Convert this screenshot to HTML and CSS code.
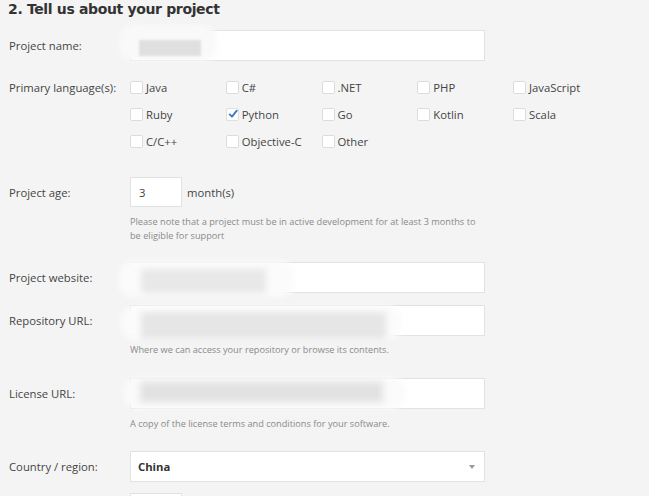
FILE: index.html
```html
<!DOCTYPE html>
<html>
<head>
<meta charset="utf-8">
<link rel="stylesheet" href="styles.css">
</head>
<body>
<h2 class="title">2. Tell us about your project</h2>
<form class="form">
  <div class="row row-name">
    <label class="lbl">Project name:</label>
    <div class="field wide">
      <div class="blur-halo halo-name"></div>
      <div class="blur blur-name"></div>
    </div>
  </div>

  <div class="row row-lang">
    <label class="lbl lbl-top">Primary language(s):</label>
    <div class="langs">
      <span class="opt"><i class="cb"></i>Java</span>
      <span class="opt"><i class="cb"></i>C#</span>
      <span class="opt"><i class="cb"></i>.NET</span>
      <span class="opt"><i class="cb"></i>PHP</span>
      <span class="opt"><i class="cb"></i>JavaScript</span>
      <span class="opt"><i class="cb"></i>Ruby</span>
      <span class="opt"><i class="cb checked"><svg viewBox="0 0 12 12" width="12" height="12"><path d="M2 6.5 L4.8 9.2 L10.5 2" fill="none" stroke="#3b78c9" stroke-width="2.2" stroke-linecap="round" stroke-linejoin="round"/></svg></i>Python</span>
      <span class="opt"><i class="cb"></i>Go</span>
      <span class="opt"><i class="cb"></i>Kotlin</span>
      <span class="opt"><i class="cb"></i>Scala</span>
      <span class="opt"><i class="cb"></i>C/C++</span>
      <span class="opt"><i class="cb"></i>Objective-C</span>
      <span class="opt"><i class="cb"></i>Other</span>
    </div>
  </div>

  <div class="row row-age">
    <label class="lbl">Project age:</label>
    <div class="age">
      <div class="field small"><span class="val">3</span></div>
      <span class="unit">month(s)</span>
    </div>
  </div>
  <div class="row note-row note-age">
    <span class="spacer"></span>
    <p class="note">Please note that a project must be in active development for at least 3 months to be eligible for support</p>
  </div>

  <div class="row row-web">
    <label class="lbl">Project website:</label>
    <div class="field wide">
      <div class="blur-halo halo-web"></div>
      <div class="blur blur-web"></div>
    </div>
  </div>

  <div class="row row-repo">
    <label class="lbl">Repository URL:</label>
    <div class="field wide">
      <div class="blur-halo halo-repo"></div>
      <div class="blur blur-repo"></div>
    </div>
  </div>
  <div class="row note-row note-repo">
    <span class="spacer"></span>
    <p class="note">Where we can access your repository or browse its contents.</p>
  </div>

  <div class="row row-lic">
    <label class="lbl">License URL:</label>
    <div class="field wide">
      <div class="blur-halo halo-lic"></div>
      <div class="blur blur-lic"></div>
    </div>
  </div>
  <div class="row note-row note-lic">
    <span class="spacer"></span>
    <p class="note">A copy of the license terms and conditions for your software.</p>
  </div>

  <div class="row row-country">
    <label class="lbl">Country / region:</label>
    <div class="field wide select">
      <span class="sel-val">China</span>
      <span class="arrow"></span>
    </div>
  </div>

  <div class="row row-last">
    <span class="spacer"></span>
    <div class="field small"></div>
  </div>
</form>
</body>
</html>
```
FILE: styles.css
```css
html, body {
  margin: 0;
  padding: 0;
  background: #f4f4f4;
  overflow: hidden;
}
body {
  padding: 0 8px;
  font-family: "Open Sans", "Liberation Sans", sans-serif;
  color: #444;
  height: 496px;
}
.title {
  margin: 0;
  padding-top: 0;
  font-family: "DejaVu Sans", sans-serif;
  font-weight: 700;
  font-size: 14px;
  line-height: 18px;
  color: #333;
  letter-spacing: -0.35px;
}
.form {
  display: flex;
  flex-direction: column;
}
.row {
  display: flex;
  align-items: center;
}
.lbl, .spacer {
  width: 122px;
  flex: none;
  font-size: 11.3px;
  color: #444;
  padding-left: 1px;
  box-sizing: border-box;
}
.field {
  position: relative;
  background: #fff;
  border: 1px solid #e2e2e2;
  box-sizing: border-box;
  height: 31px;
}
.field.wide { width: 355px; }
.field.small { width: 52px; height: 30px; display: flex; align-items: center; }
.row-name { margin-top: 12px; }
.row-lang { margin-top: 13px; align-items: flex-start; }
.lbl-top { line-height: 27px; }
.langs {
  display: grid;
  grid-template-columns: repeat(5, 95.75px);
}
.opt {
  display: flex;
  align-items: center;
  height: 27px;
  font-size: 11.3px;
  color: #444;
}
.cb {
  width: 13px;
  height: 13px;
  box-sizing: border-box;
  border: 1px solid #dcdcdc;
  background: #fff;
  border-radius: 2px;
  margin-right: 3px;
  display: flex;
  align-items: center;
  justify-content: center;
  flex: none;
}
.cb.checked { border-color: #e0e0e0; }
.cb svg { display: block; margin-top: -1px; margin-left: 1px; }
.row-age { margin-top: 22px; }
.age { display: flex; align-items: center; }
.val { font-size: 11.3px; padding-left: 8px; color: #444; }
.unit { font-size: 11.3px; margin-left: 5px; color: #444; }
.note-row { align-items: flex-start; }
.note {
  margin: 0;
  width: 355px;
  font-size: 9.2px;
  line-height: 14px;
  color: #8a8a8a;
}
.note-age { margin-top: 8px; }
.note-age .note { width: 352px; }
.row-web { margin-top: 19px; }
.row-repo { margin-top: 12px; }
.note-repo { margin-top: 7px; }
.row-lic { margin-top: 21px; }
.note-lic { margin-top: 8px; }
.row-country { margin-top: 20px; }
.select { display: flex; align-items: center; justify-content: space-between; padding: 0 9px 0 7px; }
.sel-val { font-size: 11.3px; font-weight: 700; color: #333; }
.arrow {
  width: 0; height: 0;
  border-left: 3px solid transparent;
  border-right: 3px solid transparent;
  border-top: 4px solid #999;
}
.row-last { margin-top: 11px; }

/* redaction blur overlays */
.blur-halo, .blur {
  position: absolute;
  filter: blur(3px);
  pointer-events: none;
}
.blur-halo { background: #fbfbfb; border-radius: 14px; }
.blur { background: #e3e3e3; }
.halo-name { left: -12px; top: -6px; width: 98px; height: 36px; background: #f9f9f9; }
.blur-name { left: 8px; top: 9px; width: 62px; height: 16px; background: #e0e0e0; filter: blur(1px); }
.halo-web { left: -12px; top: -2px; width: 175px; height: 36px; }
.blur-web { left: 10px; top: 6px; width: 125px; height: 24px; background: #e8e8e8; }
.halo-repo { left: -10px; top: 0px; width: 280px; height: 34px; }
.blur-repo { left: 10px; top: 6px; width: 245px; height: 27px; background: #e6e6e6; }
.halo-lic { left: -8px; top: -2px; width: 282px; height: 32px; background: #fafafa; }
.blur-lic { left: 9px; top: 3px; width: 243px; height: 20px; background: #e2e2e2; }
```
